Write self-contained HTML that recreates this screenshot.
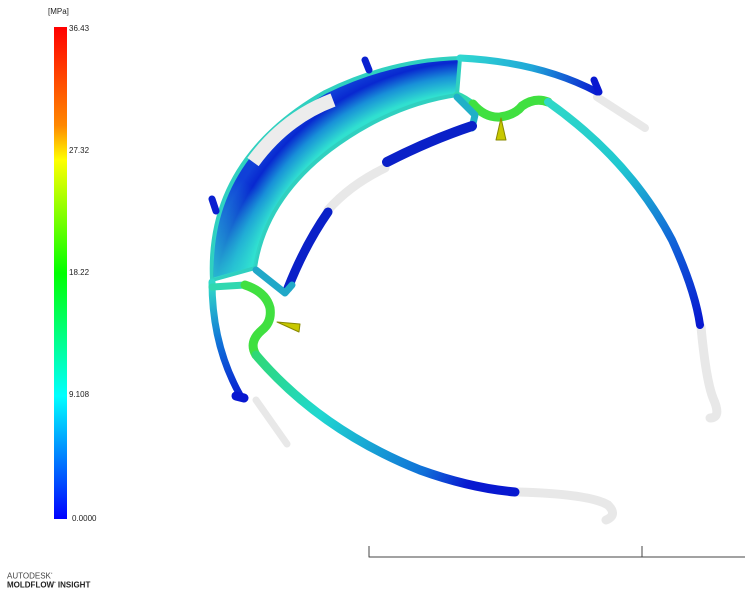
<!DOCTYPE html>
<html><head><style>
body{margin:0;width:745px;height:598px;background:#fff;overflow:hidden;position:relative;font-family:"Liberation Sans",sans-serif}
.t{position:absolute;font-size:8px;color:#222}
</style></head><body>
<div class="t" style="left:48px;top:7px">[MPa]</div>
<div style="position:absolute;left:54px;top:27px;width:13px;height:492px;background:linear-gradient(#f00,#f80 20%,#ff0 27%,#0f0 50%,#0ff 75%,#00f 100%)"></div>
<div class="t" style="left:69px;top:24px">36.43</div>
<div class="t" style="left:69px;top:146px">27.32</div>
<div class="t" style="left:69px;top:268px">18.22</div>
<div class="t" style="left:69px;top:390px">9.108</div>
<div class="t" style="left:72px;top:514px">0.0000</div>
<div style="position:absolute;left:7px;top:571px;font-size:8px;color:#444">AUTODESK<sup style="font-size:4px">*</sup></div>
<div style="position:absolute;left:7px;top:580px;font-size:8px;font-weight:bold;color:#222">MOLDFLOW<sup style="font-size:4px">*</sup> INSIGHT</div>
<svg width="745" height="598" style="position:absolute;left:0;top:0" fill="none" stroke-linecap="round" stroke-linejoin="round">
<defs>
<radialGradient id="band" gradientUnits="userSpaceOnUse" cx="480" cy="330" r="280"><stop offset=".85" stop-color="#30e0d0"/><stop offset=".91" stop-color="#1890d8"/><stop offset=".96" stop-color="#0828d0"/><stop offset="1" stop-color="#1040d8"/></radialGradient>
<linearGradient id="ends" gradientUnits="userSpaceOnUse" x1="212" y1="280" x2="330" y2="120"><stop offset="0" stop-color="#30e0d0" stop-opacity=".8"/><stop offset=".5" stop-color="#30e0d0" stop-opacity="0"/></linearGradient>
<linearGradient id="rarc" gradientUnits="userSpaceOnUse" x1="550" y1="100" x2="700" y2="325"><stop offset="0" stop-color="#30d8c8"/><stop offset=".35" stop-color="#20c8d0"/><stop offset=".7" stop-color="#1060d8"/><stop offset="1" stop-color="#0818d0"/></linearGradient>
<linearGradient id="top" gradientUnits="userSpaceOnUse" x1="460" y1="58" x2="597" y2="95"><stop offset="0" stop-color="#30d8d0"/><stop offset=".5" stop-color="#20a8d8"/><stop offset="1" stop-color="#0818d0"/></linearGradient>
<linearGradient id="low" gradientUnits="userSpaceOnUse" x1="255" y1="345" x2="515" y2="492"><stop offset="0" stop-color="#30d870"/><stop offset=".3" stop-color="#20d8d0"/><stop offset=".7" stop-color="#1070d8"/><stop offset=".85" stop-color="#0818d0"/></linearGradient>
<linearGradient id="left" gradientUnits="userSpaceOnUse" x1="212" y1="285" x2="240" y2="400"><stop offset="0" stop-color="#30d8c8"/><stop offset=".5" stop-color="#1070d8"/><stop offset="1" stop-color="#0818d0"/></linearGradient>
</defs>
<!-- gray tails -->
<path d="M597 97 L645 128" stroke="#e8e8e8" stroke-width="8"/>
<path d="M701 327 Q706 380 713 398 Q722 418 710 418" stroke="#e8e8e8" stroke-width="9"/>
<path d="M518 492 Q590 494 608 505 Q618 515 606 520" stroke="#e8e8e8" stroke-width="9"/>
<path d="M256 400 L287 444" stroke="#e8e8e8" stroke-width="7"/>
<path d="M385 168 Q350 185 328 210" stroke="#e8e8e8" stroke-width="9"/>
<!-- band -->
<path d="M212 280 Q206 160 325 92 Q390 60 460 58 L457 95 Q390 105 330 150 Q265 200 255 268 Z" fill="url(#band)" stroke="#30d0c0" stroke-width="4"/>
<path d="M214 278 Q210 200 250 160 L300 170 Q265 210 255 266 Z" fill="url(#ends)"/>
<path d="M253 162 Q285 118 333 100" stroke="#ececec" stroke-width="14" stroke-linecap="butt"/>
<!-- top rail -->
<path d="M460 58 Q540 62 597 92" stroke="url(#top)" stroke-width="7"/>
<path d="M594 80 L599 92" stroke="#0818d0" stroke-width="7"/>
<!-- right junction & arc -->
<path d="M457 95 Q465 98 475 106" stroke="#30d8b0" stroke-width="7"/>
<path d="M473 104 Q485 118 500 117 Q515 115 522 106 Q535 97 548 102" stroke="#40e040" stroke-width="9"/>
<path d="M548 102 Q630 160 672 240 Q695 290 700 325" stroke="url(#rarc)" stroke-width="8"/>
<!-- inner U -->
<path d="M457 97 L475 115 L472 128" stroke="#20b0c8" stroke-width="7"/>
<path d="M472 126 Q430 140 387 162" stroke="#0a20c8" stroke-width="10"/>
<path d="M328 212 Q305 245 288 288" stroke="#0a20c8" stroke-width="9"/>
<path d="M256 270 L285 293 L292 285" stroke="#20a8c8" stroke-width="7"/>
<!-- left lower -->
<path d="M212 282 Q212 345 240 395" stroke="url(#left)" stroke-width="7"/>
<path d="M236 396 L244 398" stroke="#0818d0" stroke-width="9"/>
<path d="M212 287 L245 285" stroke="#30d8b0" stroke-width="7"/>
<path d="M245 285 Q266 292 270 308 Q272 322 262 330 Q248 342 256 355" stroke="#40e040" stroke-width="9"/>
<path d="M256 355 Q320 430 420 470 Q470 488 515 492" stroke="url(#low)" stroke-width="9"/>
<path d="M212 199 L216 211 M365 60 L369 70" stroke="#0a20d0" stroke-width="7"/>
<!-- markers -->
<path d="M277 322 L300 324 L299 332 Z" fill="#c8c800" stroke="#888800" stroke-width="1"/>
<path d="M496 140 L506 140 L501 118 Z" fill="#c8c800" stroke="#888800" stroke-width="1"/>
<!-- scale -->
<path d="M369 546 V557 H745 M642 546 V557" stroke="#444" stroke-width="1" stroke-linecap="butt"/>
</svg>
</body></html>
